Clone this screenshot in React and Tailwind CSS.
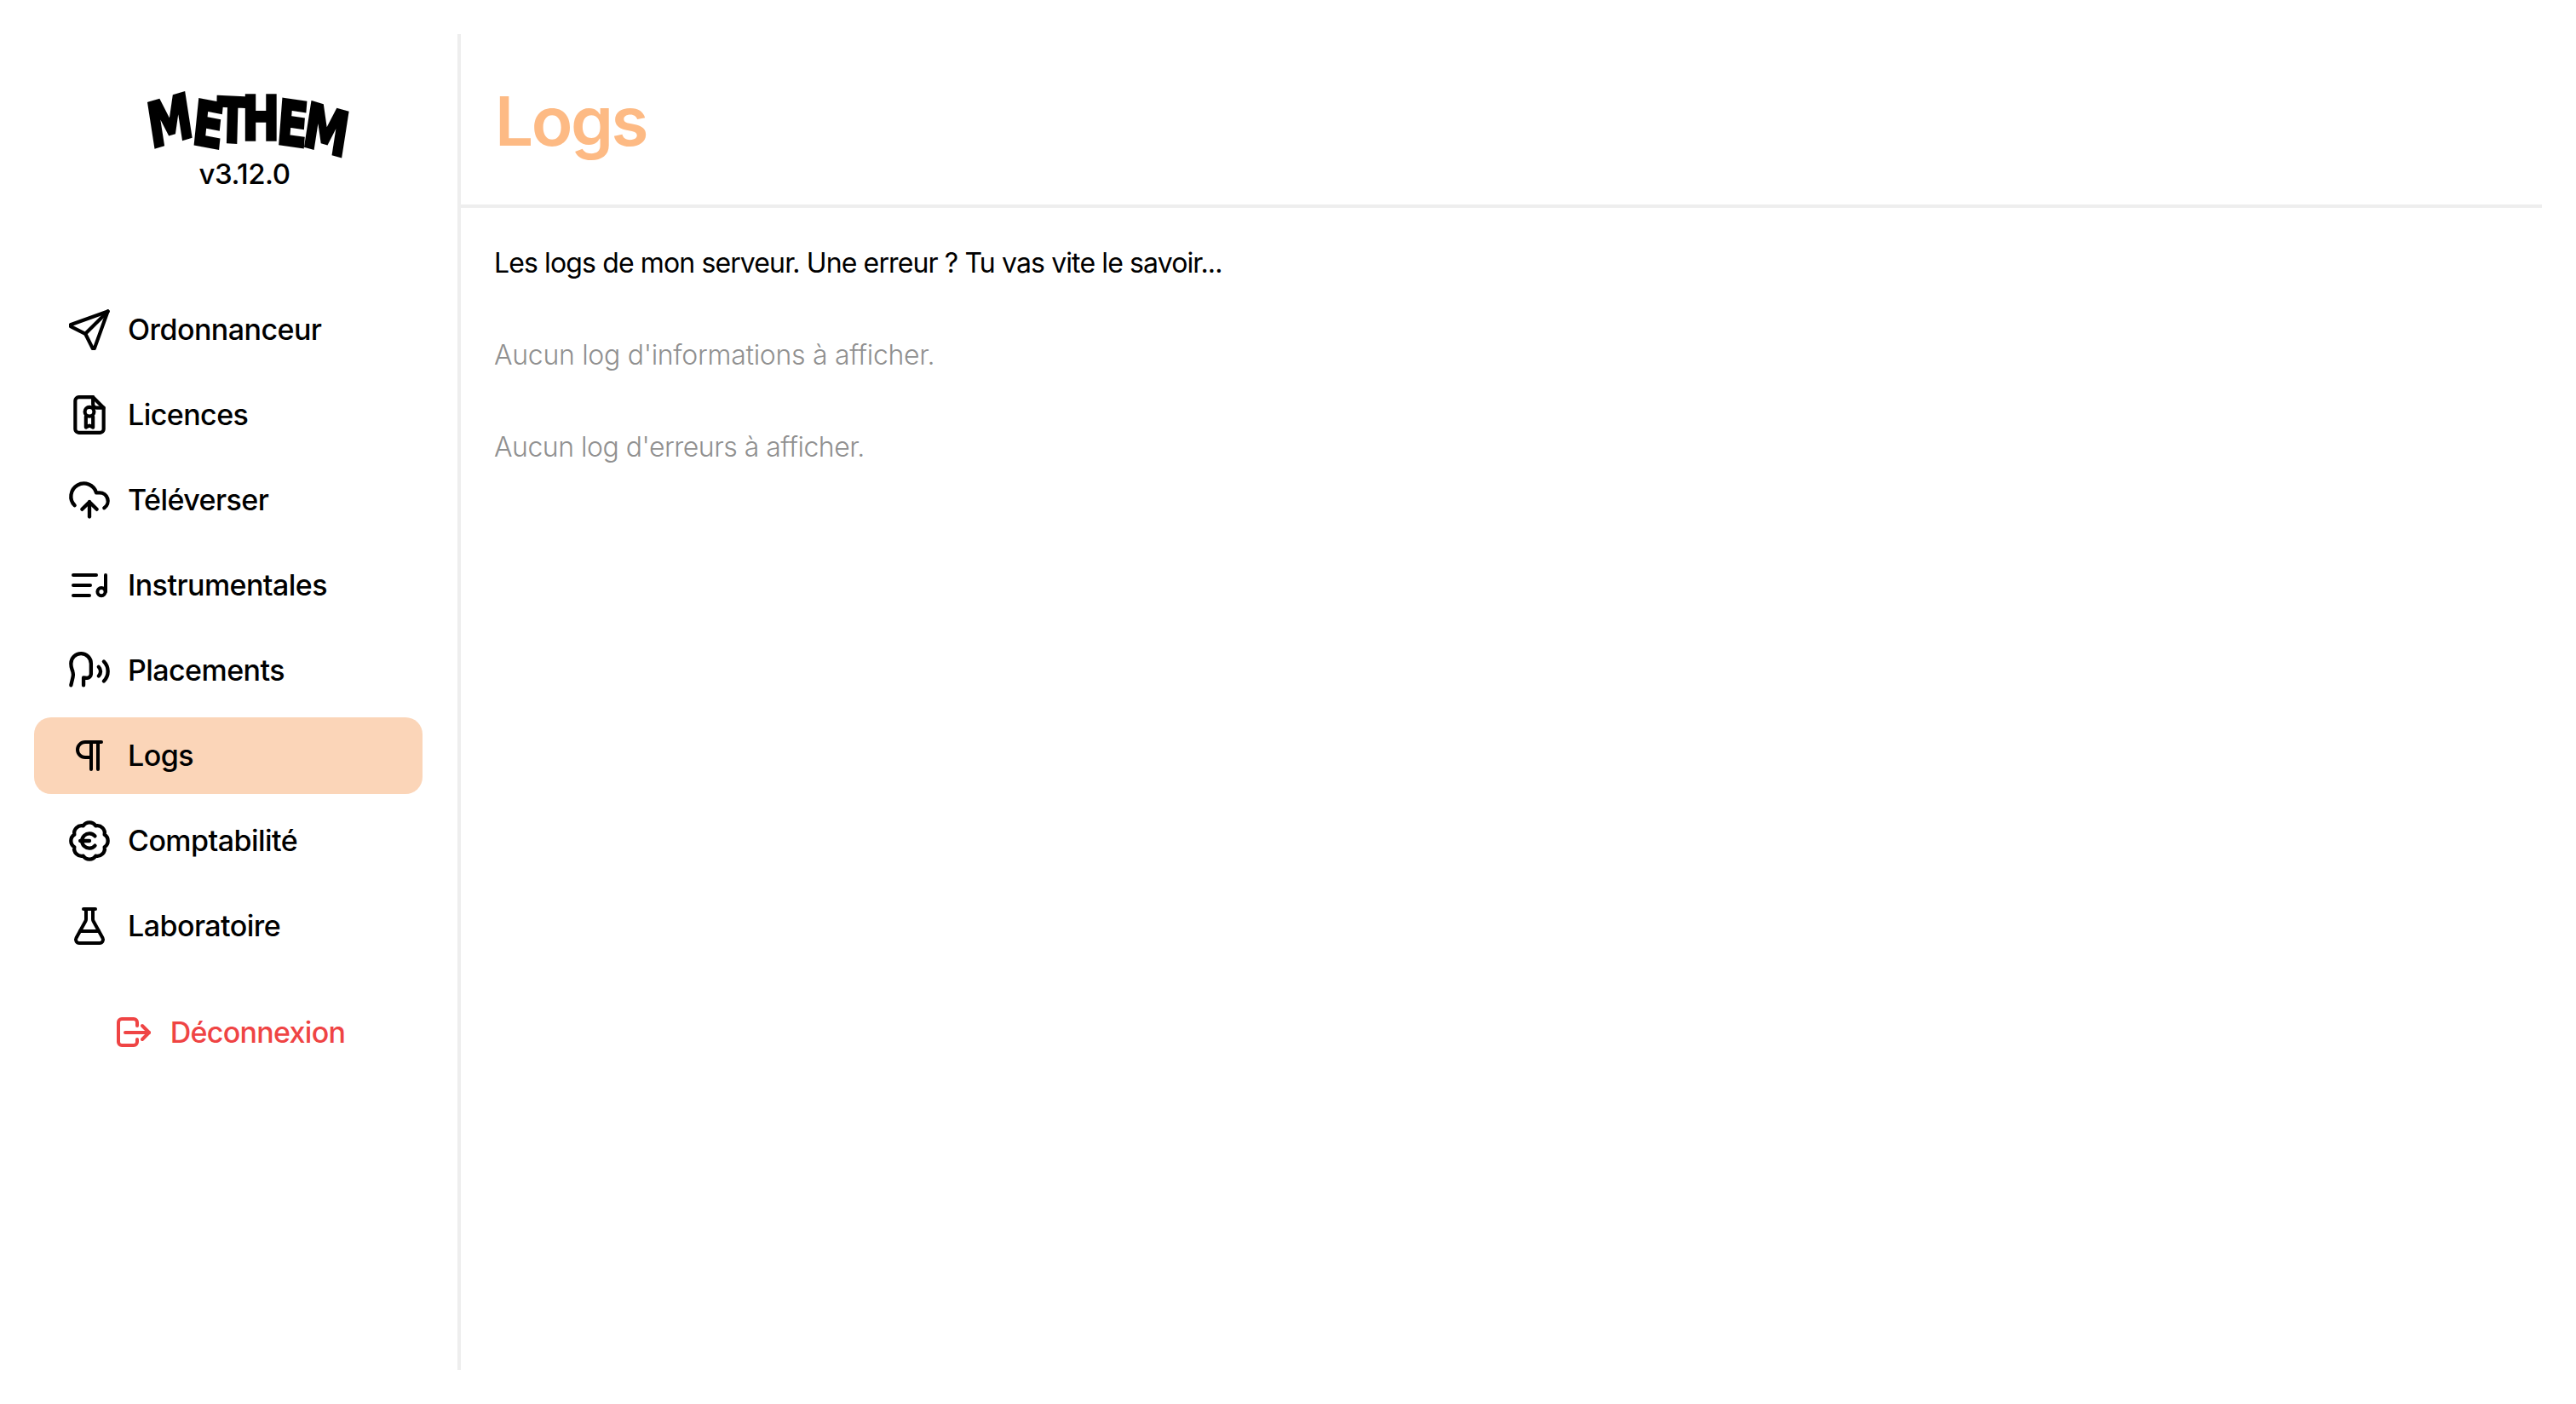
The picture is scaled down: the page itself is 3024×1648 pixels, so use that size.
import React from "react";
import { CloudUpload, Speech, Pilcrow, BadgeEuro, FlaskConical } from "lucide-react";

const Send = (p) => (
  <svg viewBox="2 2 20 20" fill="none" stroke="currentColor" strokeWidth="1.75" strokeLinecap="round" strokeLinejoin="round" {...p}>
    <path d="M10 14 21 3" />
    <path d="M21 3l-6.5 18a.55.55 0 0 1-1 0l-3.5-7-7-3.5a.55.55 0 0 1 0-1L21 3" />
  </svg>
);
const FileAward = (p) => (
  <svg viewBox="0 0 24 24" fill="none" stroke="currentColor" strokeWidth="2" strokeLinecap="round" strokeLinejoin="round" {...p}>
    <path d="M14 2H6a2 2 0 0 0-2 2v16a2 2 0 0 0 2 2h12a2 2 0 0 0 2-2V8z" />
    <path d="M14 2v4a2 2 0 0 0 2 2h4" />
    <circle cx="12" cy="10.200" r="2.600" />
    <path d="M10 13v6l2-1 2 1v-6" />
  </svg>
);
const MusicList = (p) => (
  <svg viewBox="0 0 24 24" fill="none" stroke="currentColor" strokeWidth="2" strokeLinecap="round" strokeLinejoin="round" {...p}>
    <path d="M2.500 6h13.500" />
    <path d="M2.500 12h10" />
    <path d="M2.500 18h9.500" />
    <circle cx="19" cy="15.800" r="2.300" />
    <path d="M21.500 15.800V6" />
  </svg>
);
const Exit = (p) => (
  <svg viewBox="0 0 44 44" fill="none" stroke="currentColor" strokeWidth="4" strokeLinecap="round" strokeLinejoin="round" {...p}>
    <path d="M26 14v-4a4 4 0 0 0-4-4H8a4 4 0 0 0-4 4v23a4 4 0 0 0 4 4h14a4 4 0 0 0 4-4v-3" />
    <path d="M12 22h28" />
    <path d="M32 14l8 8-8 8" />
  </svg>
);

const items = [
  ["Ordonnanceur", Send, "w-[48px] h-[48px]"],
  ["Licences", FileAward, "w-[50px] h-[50px] -mx-[1px]"],
  ["Téléverser", CloudUpload, "w-[52px] h-[52px] -mx-[2px]"],
  ["Instrumentales", MusicList, "w-[48px] h-[48px]"],
  ["Placements", Speech, "w-[52px] h-[52px] -mx-[2px]"],
  ["Logs", Pilcrow, "w-[48px] h-[48px]"],
  ["Comptabilité", BadgeEuro, "w-[52px] h-[52px] -mx-[2px]"],
  ["Laboratoire", FlaskConical, "w-[48px] h-[48px]"],
];

export default function App() {
  return (
    <div className="h-screen flex py-10 pr-10 bg-white text-black font-['Inter',sans-serif]">
      <aside className="w-[541px] shrink-0 border-r-4 border-[#eeeeee] pl-10 pr-[41px] flex flex-col">
        <div className="ml-[38px] pt-[70px] h-[302px] flex flex-col items-center">
          <svg viewBox="0 0 242 74" className="w-[242px] h-[74px] overflow-visible" aria-label="METHEM">
            <text
              transform="scale(0.73 1)"
              x="16"
              y="64"
              fontSize="72"
              fontWeight="700"
              fontFamily="'DejaVu Sans', sans-serif"
              fill="black"
              stroke="black"
              strokeWidth="3.500"
              rotate="-12 8 2 0 6 12"
              dx="0 -8 -8 -8 -6 -8"
              dy="0 -6 -2 -2 4 2"
            >
              METHEM
            </text>
          </svg>
          <div className="text-[33px] leading-none font-medium mt-[4px] tracking-[-0.5px]">v3.12.0</div>
        </div>
        <nav className="flex flex-col gap-[10px]">
          {items.map(([label, Icon, size]) => (
            <div
              key={label}
              className={`h-[90px] flex items-center gap-[21px] pl-[41px] rounded-[20px] ${label === "Logs" ? "bg-[#fbd5b8]" : ""}`}
            >
              <Icon className={`${size} shrink-0`} />
              <span className="text-[34px] font-[550] leading-none tracking-[-0.55px]">{label}</span>
            </div>
          ))}
        </nav>
        <div className="mt-[35px] h-[90px] pl-[4px] flex items-center justify-center gap-[21px] text-[#ef4444]">
          <Exit className="w-[44px] h-[44px] shrink-0" />
          <span className="text-[34px] font-[550] leading-none tracking-[-0.7px]">Déconnexion</span>
        </div>
      </aside>
      <main className="flex-1 min-w-0">
        <header className="h-[204px] border-b-4 border-[#eeeeee] pl-[40px] flex items-center">
          <h1 className="text-[80px] font-semibold leading-none text-[#fdba84] tracking-[-2.5px] mt-[4px]">Logs</h1>
        </header>
        <div className="pl-[39px] pt-[41px] text-[32px] leading-[48px]">
          <p className="font-normal tracking-[-0.88px]">Les logs de mon serveur. Une erreur ? Tu vas vite le savoir...</p>
          <p className="mt-[60px] font-light text-[#909090] tracking-[-0.3px]">Aucun log d'informations à afficher.</p>
          <p className="mt-[60px] font-light text-[#909090] tracking-[-0.5px]">Aucun log d'erreurs à afficher.</p>
        </div>
      </main>
    </div>
  );
}
